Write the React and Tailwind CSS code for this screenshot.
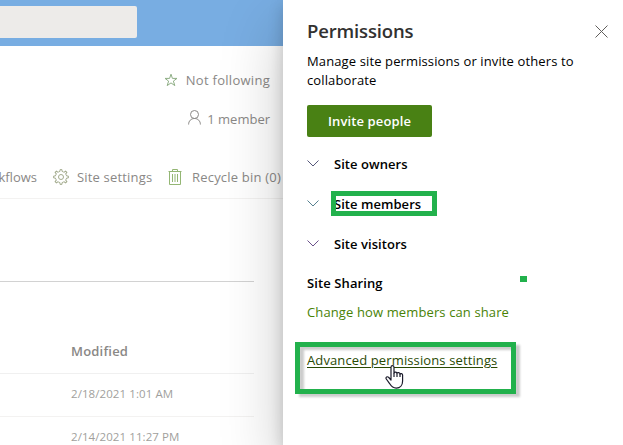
import React from "react";

function Chevron({ className }) {
  return (
    <svg className={"h-3 w-3 shrink-0 " + className} viewBox="0 0 12 12" fill="none" stroke="currentColor" strokeWidth="1">
      <path d="M.5 2.500 6 8l5.500-5.500" />
    </svg>
  );
}

function Gear() {
  const teeth = [0, 45, 90, 135, 180, 225, 270, 315];
  return (
    <svg className="h-4 w-4 shrink-0 text-[#a3ab8d]" viewBox="0 0 16 16" fill="none" stroke="currentColor" strokeWidth="1">
      <circle cx="8" cy="8" r="2.5" />
      {teeth.map((a) => (
        <path key={a} transform={`rotate(${a} 8 8)`} d="M5.9 2.8 6.9 2.4 7.1.6h1.8l.2 1.8 1 .4" />
      ))}
    </svg>
  );
}

function Trash() {
  return (
    <svg className="h-4 w-[14px] shrink-0 text-[#94b674]" viewBox="0 0 14 16" fill="none" stroke="currentColor">
      <path d="M.5 2.5h13M4.5 2.5v-2h5v2M1.500 2.5v13h11v-13M4.5 5v8M7 5v8M9.5 5v8" />
    </svg>
  );
}

function Section({ label, chevron, boxed }) {
  return (
    <div className="relative flex h-10 items-center">
      <Chevron className={chevron} />
      <span className="ml-[15px] font-semibold tracking-[0.05px] whitespace-nowrap">{label}</span>
      {boxed && <span className="absolute top-[7px] left-6 h-[25px] w-[106px] border-[5px] border-[#22b14c]" />}
    </div>
  );
}

export default function App() {
  return (
    <div className="flex h-[445px] w-[623px] overflow-hidden bg-white font-['Open_Sans','Noto_Sans',sans-serif] text-[13px] leading-5">
      <main className="h-full w-[283px] shrink-0 overflow-hidden text-[#8a8886]">
        <div className="h-[46px] bg-[#78ade2] pt-[6px]">
          <div className="h-8 w-[137px] rounded-r-[2px] bg-[#edebe9]" />
        </div>
        <div className="mt-6 flex h-5 items-center justify-end pr-[13px]">
          <svg className="mr-2 h-[14px] w-[14px] text-[#8eae85]" viewBox="0 0 14 14" fill="none" stroke="currentColor">
            <path d="M7 1.200 8.400 5.400H13L9.400 8.100l1.400 4.500L7 9.900l-3.800 2.700 1.400-4.500L1 5.400h4.600z" />
          </svg>
          <span className="tracking-[0.28px] whitespace-nowrap">Not following</span>
        </div>
        <div className="mt-[19px] flex h-5 items-center justify-end pr-[13px]">
          <svg className="mr-[6px] h-[15px] w-[13px] -translate-y-[2px]" viewBox="0 0 13 15" fill="none" stroke="currentColor">
            <circle cx="6.5" cy="4.5" r="4" />
            <path d="M.6 14.5c0-3.5 2.4-6 5.9-6s5.9 2.500 5.900 6" />
          </svg>
          <span className="whitespace-nowrap">1 member</span>
        </div>
        <div className="mt-[38px] flex h-8 w-[283px] items-start border-b border-[#f3f2f1]">
          <span className="flex w-[37px] shrink-0 justify-end whitespace-nowrap">kflows</span>
          <span className="ml-4 flex h-5 items-center"><Gear /></span>
          <span className="ml-2 w-[76px] shrink-0 tracking-[0.18px] whitespace-nowrap">Site settings</span>
          <span className="ml-[15px] flex h-5 items-center"><Trash /></span>
          <span className="ml-[10px] tracking-[0.2px] whitespace-nowrap">Recycle bin (0)</span>
        </div>
        <div className="mt-[82px] h-[1px] w-[254px] bg-[#d2d2d2]" />
        <div className="flex h-[92px] w-[254px] items-end border-b border-[#f0f0f0] pb-[12px] pl-[71px] font-semibold tracking-[0.2px]">
          Modified
        </div>
        <div className="flex h-[43px] w-[254px] items-center border-b border-[#f3f2f1] pb-[2px] pl-[71px] text-[11.5px] tracking-[0.08px] text-[#a19f9d]">
          2/18/2021 1:01 AM
        </div>
        <div className="flex h-[42px] w-[254px] items-center pb-[2px] pl-[71px] text-[11.5px] tracking-[0.08px] text-[#a19f9d]">
          2/14/2021 11:27 PM
        </div>
      </main>

      <aside className="relative z-10 h-full w-[340px] shrink-0 bg-white pl-6 text-black shadow-[0_26px_58px_rgba(0,0,0,0.22),0_5px_14px_rgba(0,0,0,0.18)]">
        <div className="flex h-[51px] items-center justify-between pt-[11px] pr-[15px]">
          <h1 className="text-[18.5px] font-semibold tracking-[-0.15px] text-[#323130]">Permissions</h1>
          <svg className="h-[13px] w-[13px] text-[#605e5c]" viewBox="0 0 13 13" fill="none" stroke="currentColor">
            <path d="M.5.5l12 12M12.500.5l-12 12" />
          </svg>
        </div>
        <p className="h-[54px] pt-[1px] leading-[19px] tracking-[0.12px] whitespace-nowrap">
          Manage site permissions or invite others to
          <br />
          collaborate
        </p>
        <button className="h-8 w-[125px] rounded-[2px] bg-[#498114] pb-[1px] font-semibold tracking-[0.12px] text-white">Invite people</button>
        <div className="mt-[7px]">
          <Section label="Site owners" chevron="text-[#55577a]" />
          <Section label="Site members" chevron="text-[#55808f]" boxed />
          <Section label="Site visitors" chevron="text-[#6a508a]" />
        </div>
        <div className="relative mt-[9px] h-5 font-semibold tracking-[0.1px]">
          Site Sharing
          <span className="absolute top-[3px] left-[213px] h-[6px] w-[7px] bg-[#22b14c]" />
        </div>
        <div className="mt-[9px] h-5 tracking-[0.12px] whitespace-nowrap text-[#498205]">Change how members can share</div>
        <div className="relative mt-7 h-5 whitespace-nowrap text-[#294903]">
          <span className="tracking-[0.12px] underline underline-offset-2">Advanced permissions settings</span>
          <span className="absolute -top-[8px] -left-3 h-[52px] w-[221px] border-[5px] border-[#22b14c] drop-shadow-[4px_3px_1px_rgba(0,0,0,0.2)]" />
          <svg className="absolute top-[15px] left-[78px] h-[24px] w-[19px]" viewBox="0 0 19 24" fill="white" stroke="#1b1b2b" strokeWidth="1.2" strokeLinejoin="round">
            <path d="M6 15V2.200C6 .2 9 .2 9 2.200V8c.3-1.300 3-1.300 3 .4.4-1.200 3-1 3 .7.500-.9 2.600-.6 2.600 1v6c0 4-2.500 7-6.300 7-3.600 0-5-1.700-6.500-4.300L1.300 14c-1-2 1-3 2.500-1.500z" />
            <path d="M9 8v4M12 8.400V12M15 9.100V12" />
          </svg>
        </div>
      </aside>
    </div>
  );
}
